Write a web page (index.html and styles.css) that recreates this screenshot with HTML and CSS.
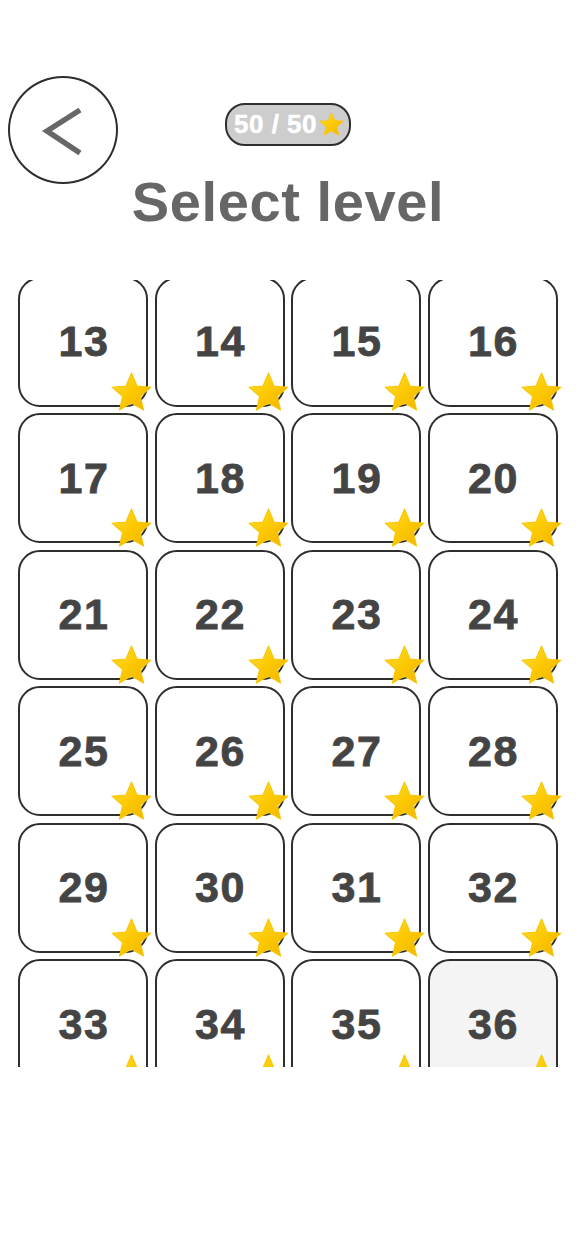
FILE: index.html
```
<!DOCTYPE html>
<html lang="en">
<head>
    <meta charset="UTF-8">
    <meta name="viewport" content="width=device-width, initial-scale=1.0">
    <title>Select level</title>
    <link rel="stylesheet" href="styles.css">
</head>
<body>

<svg class="defs" width="0" height="0">
    <defs>
        <linearGradient id="star-fill" x1="0" y1="0" x2="1" y2="1">
            <stop offset="0" stop-color="#ffdf3d"/>
            <stop offset="0.5" stop-color="#fcc800"/>
            <stop offset="1" stop-color="#efb300"/>
        </linearGradient>
        <symbol id="star" viewBox="0 0 40 40">
            <polygon points="20,1 25.4,13.6 39,14.8 28.7,23.8 31.8,37.2 20,30.2 8.2,37.2 11.3,23.8 1,14.8 14.6,13.6"
                     fill="url(#star-fill)" stroke="#f8c500" stroke-width="1" stroke-linejoin="round"/>
        </symbol>
    </defs>
</svg>

<div class="header">
    <div class="back-btn">
        <svg width="106" height="104" viewBox="0 0 106 104">
            <polyline points="70,32 37,53 70,75" fill="none" stroke="#676767" stroke-width="5.5"/>
        </svg>
    </div>
    <div class="stars-badge">
        <span>50 / 50</span>
        <svg class="badge-star"><use href="#star"/></svg>
    </div>
    <h1 class="title">Select level</h1>
</div>

<div class="levels">
    <div class="level-grid">
        <div class="level">13<svg class="star"><use href="#star"/></svg></div>
        <div class="level">14<svg class="star"><use href="#star"/></svg></div>
        <div class="level">15<svg class="star"><use href="#star"/></svg></div>
        <div class="level">16<svg class="star"><use href="#star"/></svg></div>
        <div class="level">17<svg class="star"><use href="#star"/></svg></div>
        <div class="level">18<svg class="star"><use href="#star"/></svg></div>
        <div class="level">19<svg class="star"><use href="#star"/></svg></div>
        <div class="level">20<svg class="star"><use href="#star"/></svg></div>
        <div class="level">21<svg class="star"><use href="#star"/></svg></div>
        <div class="level">22<svg class="star"><use href="#star"/></svg></div>
        <div class="level">23<svg class="star"><use href="#star"/></svg></div>
        <div class="level">24<svg class="star"><use href="#star"/></svg></div>
        <div class="level">25<svg class="star"><use href="#star"/></svg></div>
        <div class="level">26<svg class="star"><use href="#star"/></svg></div>
        <div class="level">27<svg class="star"><use href="#star"/></svg></div>
        <div class="level">28<svg class="star"><use href="#star"/></svg></div>
        <div class="level">29<svg class="star"><use href="#star"/></svg></div>
        <div class="level">30<svg class="star"><use href="#star"/></svg></div>
        <div class="level">31<svg class="star"><use href="#star"/></svg></div>
        <div class="level">32<svg class="star"><use href="#star"/></svg></div>
        <div class="level">33<svg class="star"><use href="#star"/></svg></div>
        <div class="level">34<svg class="star"><use href="#star"/></svg></div>
        <div class="level">35<svg class="star"><use href="#star"/></svg></div>
        <div class="level current">36<svg class="star"><use href="#star"/></svg></div>
    </div>
</div>

</body>
</html>
```

FILE: styles.css
```
body {
    margin: 0;
    background: #ffffff;
    font-family: "Liberation Sans", Arial, sans-serif;
}
.defs {
    position: absolute;
}
.header {
    display: grid;
    grid-template-columns: 110px 1fr 110px;
    padding: 76px 8px 0;
}
.back-btn {
    grid-column: 1;
    grid-row: 1 / span 2;
    align-self: start;
    width: 110px;
    height: 108px;
    box-sizing: border-box;
    border: 2px solid #2e2e2e;
    border-radius: 50%;
}
.back-btn svg {
    display: block;
}
.stars-badge {
    grid-column: 2;
    grid-row: 1;
    justify-self: center;
    margin-top: 27px;
    height: 43px;
    box-sizing: border-box;
    display: flex;
    align-items: center;
    gap: 2px;
    padding: 0 5px 0 7px;
    background: #cdcdcd;
    border: 2px solid #2e2e2e;
    border-radius: 20px;
    color: #ffffff;
    font-weight: bold;
    font-size: 26px;
    letter-spacing: 0.5px;
    -webkit-text-stroke: 0.5px #ffffff;
}
.badge-star {
    width: 25px;
    height: 25px;
}
.title {
    grid-column: 1 / -1;
    grid-row: 2;
    margin: 28px 0 0;
    text-align: center;
    font-size: 56px;
    line-height: 56px;
    color: #666666;
    letter-spacing: 0.6px;
}
.levels {
    margin-top: 50px;
    height: 787px;
    overflow: hidden;
}
.level-grid {
    display: grid;
    grid-template-columns: repeat(4, 130px);
    grid-auto-rows: 130px;
    gap: 6.5px;
    justify-content: center;
    margin-top: -3.5px;
}
.level {
    position: relative;
    box-sizing: border-box;
    border: 2.5px solid #2e2e2e;
    border-radius: 22px;
    background: #ffffff;
    display: flex;
    align-items: center;
    justify-content: center;
    font-weight: bold;
    font-size: 43px;
    color: #444444;
    letter-spacing: 1.5px;
    text-indent: 1.5px;
    -webkit-text-stroke: 0.8px #444444;
}
.level.current {
    background: #f4f4f4;
}
.star {
    position: absolute;
    left: 91px;
    top: 93px;
    width: 41px;
    height: 41px;
}
```
